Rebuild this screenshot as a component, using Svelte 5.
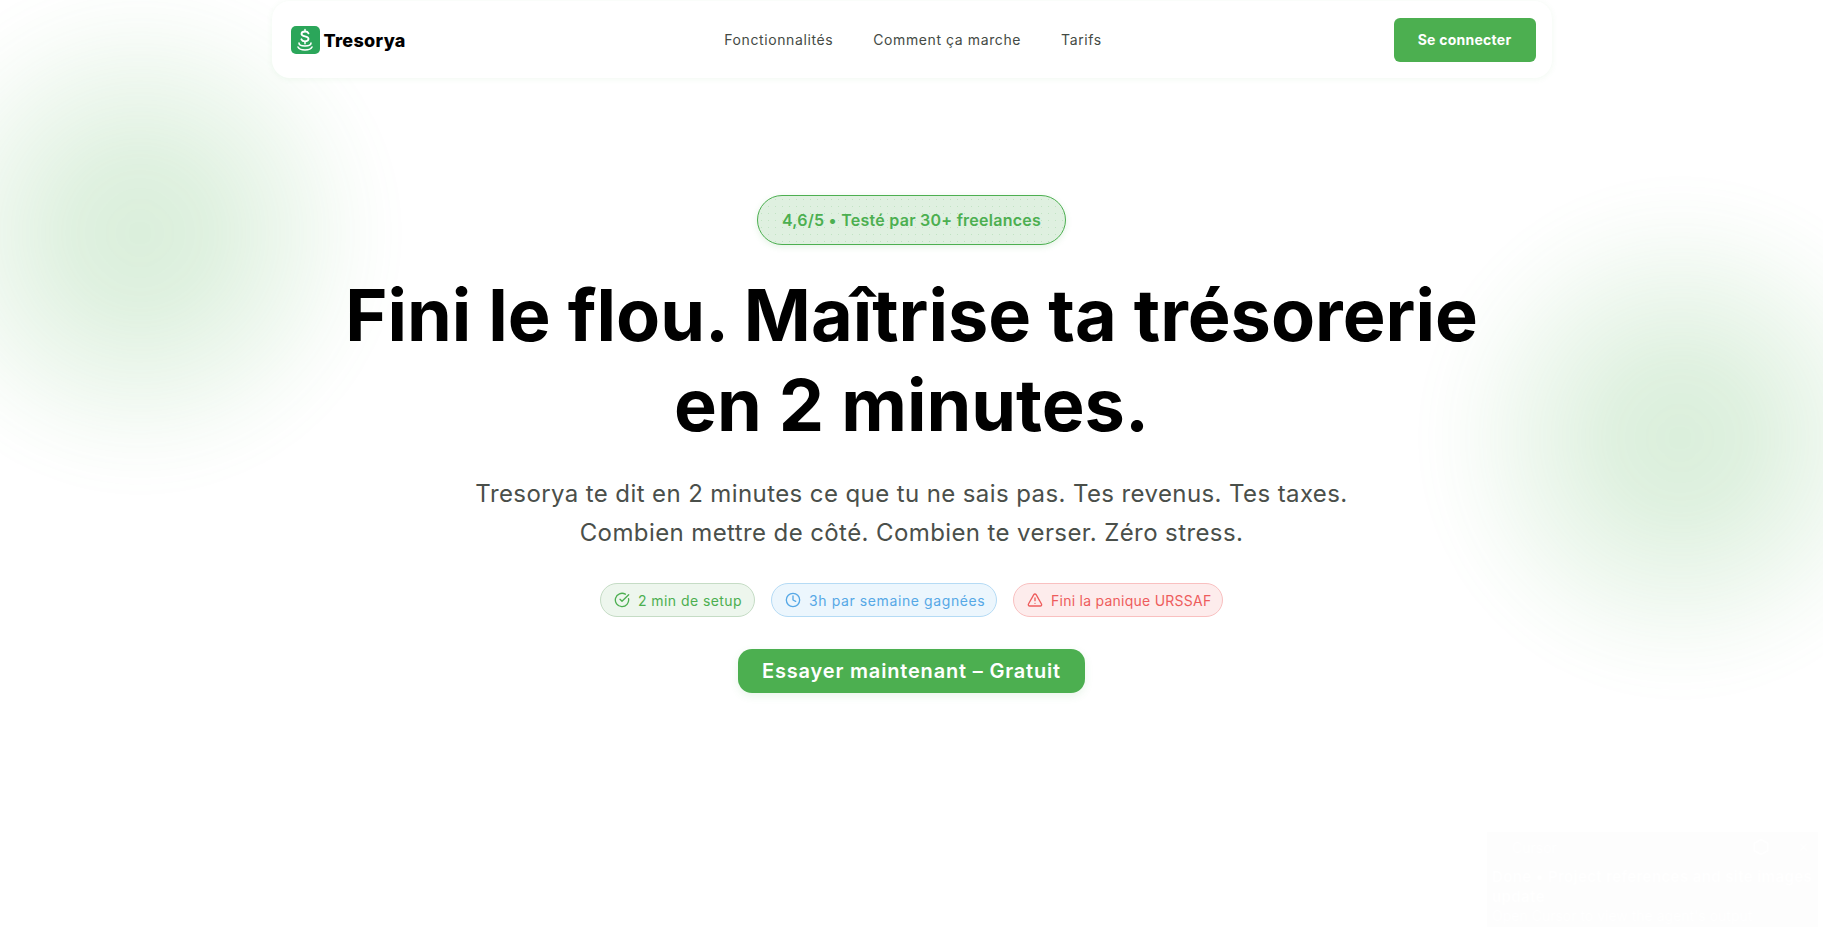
<script>
  const badges = [
    { tone: 'green', icon: 'check', label: '2 min de setup' },
    { tone: 'blue', icon: 'clock', label: '3h par semaine gagnées' },
    { tone: 'red', icon: 'alert', label: 'Fini la panique URSSAF' }
  ]
  const links = ['Fonctionnalités', 'Comment ça marche', 'Tarifs']
</script>

<div class="page">
  <div class="blob blob-left"></div>
  <div class="blob blob-right"></div>

  <header class="nav">
    <a class="brand" href="#top">
      <span class="logo">
        <svg viewBox="0 0 28 28" width="28" height="28" fill="none" stroke="#fff" stroke-linecap="round" stroke-linejoin="round">
          <path d="M17.500 7.400c-.5-1.200-1.800-1.900-3.500-1.900-2 0-3.500 1-3.500 2.500 0 3.300 7 1.600 7 4.800 0 1.500-1.500 2.500-3.500 2.500-1.800 0-3.100-.8-3.600-2" stroke-width="1.800"/>
          <path d="M14 3.500v2M14 15.800v2" stroke-width="1.500"/>
          <path d="M8 17c0 1.800 2.800 3 6 3s6-1.200 6-3" stroke-width="1.600"/>
          <path d="M7 21c.8 1.800 3.600 3 7 3s6.200-1.200 7-3" stroke-width="1.600"/>
        </svg>
      </span>
      <span class="brand-name">Tresorya</span>
    </a>
    <nav class="links">
      {#each links as link}
        <a href="#top">{link}</a>
      {/each}
    </nav>
    <button class="login">Se connecter</button>
  </header>

  <main class="hero">
    <div class="rating">4,6/5 • Testé par 30+ freelances</div>
    <h1>Fini le flou. Maîtrise ta trésorerie<br />en 2 minutes.</h1>
    <p class="lead">
      Tresorya te dit en 2 minutes ce que tu ne sais pas. Tes revenus. Tes taxes.<br />
      Combien mettre de côté. Combien te verser. Zéro stress.
    </p>
    <div class="badges">
      {#each badges as badge}
        <span class="badge {badge.tone}">
          <svg viewBox="0 0 24 24" width="16" height="16" fill="none" stroke="currentColor" stroke-width="2" stroke-linecap="round" stroke-linejoin="round">
            {#if badge.icon === 'check'}
              <path d="M21.800 10A10 10 0 1 1 17 3.300" />
              <path d="m9 11 3 3L22 4" />
            {:else if badge.icon === 'clock'}
              <circle cx="12" cy="12" r="10" />
              <path d="M12 6v6l4 2" />
            {:else}
              <path d="m21.700 18-8-14a2 2 0 0 0-3.500 0l-8 14A2 2 0 0 0 4 21h16a2 2 0 0 0 1.700-3" />
              <path d="M12 9v4" />
              <path d="M12 17h.01" />
            {/if}
          </svg>
          {badge.label}
        </span>
      {/each}
    </div>
    <button class="cta">Essayer maintenant – Gratuit</button>
  </main>

  <aside class="toast">
    <div class="toast-head">
      <span class="toast-app">Cursor</span>
      <svg viewBox="0 0 24 24" width="18" height="18" fill="none" stroke="#fff" stroke-width="2">
        <path d="M12 2 21 7v10l-9 5-9-5V7z" />
      </svg>
      <span class="toast-close">✕</span>
    </div>
    <div class="toast-title">Done • Project references and site images<br />update</div>
    <div class="toast-body">Open Cursor to view the agent's output</div>
  </aside>
</div>

<style>
  :global(body) {
    margin: 0;
    background: #fff;
  }

  .page {
    position: relative;
    width: 1823px;
    height: 927px;
    overflow: hidden;
    font-family: Inter, 'Open Sans', sans-serif;
    color: #000;
  }

  .blob {
    position: absolute;
    width: 520px;
    height: 520px;
    background: radial-gradient(
      circle closest-side,
      rgba(76, 175, 80, 0.205) 0%,
      rgba(76, 175, 80, 0.175) 27%,
      rgba(76, 175, 80, 0.095) 58%,
      rgba(76, 175, 80, 0.03) 81%,
      rgba(76, 175, 80, 0) 100%
    );
    filter: blur(10px);
  }

  .blob-left {
    left: -120px;
    top: -27px;
  }

  .blob-right {
    left: 1420px;
    top: 178px;
  }

  .nav {
    position: relative;
    box-sizing: border-box;
    width: 1280px;
    height: 77px;
    margin: 1px auto 0;
    padding: 0 16px 0 19px;
    display: grid;
    grid-template-columns: 1fr auto 1fr;
    align-items: center;
    background: #fff;
    border-radius: 18px;
    box-shadow: 0 1px 6px rgba(76, 175, 80, 0.08);
  }

  .brand {
    display: flex;
    align-items: center;
    gap: 4px;
    text-decoration: none;
    color: #000;
  }

  .logo {
    width: 29px;
    height: 28px;
    display: flex;
    align-items: center;
    justify-content: center;
    border-radius: 5px;
    background: #2ba65a;
  }

  .brand-name {
    padding-top: 2px;
    font-size: 18px;
    font-weight: 800;
    letter-spacing: 0.3px;
  }

  .links {
    display: flex;
    gap: 40px;
  }

  .links a {
    font-size: 14px;
    font-weight: 400;
    letter-spacing: 0.6px;
    color: #444a44;
    text-decoration: none;
  }

  .login {
    justify-self: end;
    width: 142px;
    height: 44px;
    border: none;
    border-radius: 6px;
    background: #4caf50;
    color: #fff;
    font-family: inherit;
    font-size: 14px;
    font-weight: 700;
    letter-spacing: 0.25px;
  }

  .hero {
    position: relative;
    display: flex;
    flex-direction: column;
    align-items: center;
    padding-top: 117px;
  }

  .rating {
    box-sizing: border-box;
    height: 50px;
    width: 309px;
    display: flex;
    align-items: center;
    justify-content: center;
    border: 1px solid #4caf50;
    border-radius: 25px;
    background-color: #dff0e0;
    background-image: radial-gradient(rgba(76, 175, 80, 0.2) 0.5px, transparent 0.7px);
    background-size: 7px 7px;
    color: #4caf50;
    font-size: 16px;
    font-weight: 600;
    letter-spacing: 0.26px;
    box-shadow: 0 2px 6px rgba(76, 175, 80, 0.15);
  }

  h1 {
    margin: 25px 0 0;
    font-size: 72px;
    line-height: 90px;
    font-weight: 700;
    text-align: center;
    color: #000;
  }

  .lead {
    margin: 24px 0 0;
    font-size: 24px;
    line-height: 39px;
    font-weight: 400;
    letter-spacing: 0.4px;
    text-align: center;
    color: #4a4f4a;
  }

  .badges {
    margin-top: 31px;
    display: flex;
    gap: 16px;
  }

  .badge {
    box-sizing: border-box;
    height: 34px;
    padding: 0 13px;
    display: flex;
    align-items: center;
    gap: 8px;
    border: 1px solid;
    border-radius: 17px;
    font-size: 14px;
    white-space: nowrap;
  }

  .badge svg {
    flex-shrink: 0;
  }

  .green {
    width: 155px;
    letter-spacing: 0.43px;
    color: #4caf50;
    background: #edf6ed;
    border-color: #c5dcc5;
  }

  .blue {
    width: 226px;
    letter-spacing: 0.6px;
    color: #56a8e6;
    background: #ecf6fd;
    border-color: #b5dbf5;
  }

  .red {
    width: 210px;
    letter-spacing: 0.25px;
    color: #ee5c5c;
    background: #fdecec;
    border-color: #f9c0c0;
  }

  .cta {
    margin-top: 32px;
    width: 347px;
    height: 44px;
    border: none;
    border-radius: 14px;
    background: #4caf50;
    color: #fff;
    font-family: inherit;
    font-size: 20px;
    font-weight: 600;
    letter-spacing: 0.82px;
    box-shadow: 0 3px 8px rgba(76, 175, 80, 0.12);
  }

  .toast {
    position: absolute;
    left: 1487px;
    top: 832px;
    width: 331px;
    height: 95px;
    box-sizing: border-box;
    padding: 5px 5px 0;
    background: #fdfdfd;
    color: #fff;
  }

  .toast-head {
    display: flex;
    align-items: center;
    height: 20px;
    padding-left: 20px;
    font-size: 14px;
  }

  .toast-app {
    flex: 1;
  }

  .toast-close {
    margin: 0 4px 0 28px;
    font-size: 13px;
  }

  .toast-title {
    margin-top: 10px;
    font-size: 15px;
    font-weight: 600;
    line-height: 20px;
    letter-spacing: 0.4px;
    white-space: nowrap;
  }

  .toast-body {
    font-size: 14px;
    line-height: 18px;
  }
</style>
